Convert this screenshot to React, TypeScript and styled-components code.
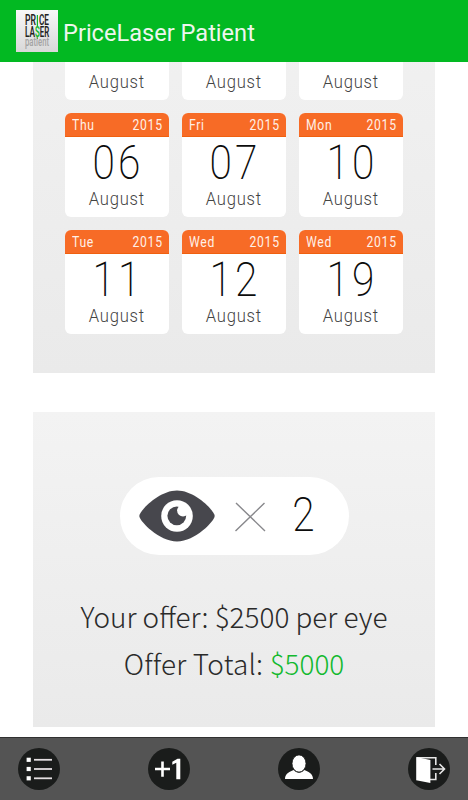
import React from 'react';
import styled, { createGlobalStyle } from 'styled-components';

const GlobalStyle = createGlobalStyle`
  * { box-sizing: border-box; }
  body { margin: 0; background: #fff; font-family: Roboto, "Liberation Sans", sans-serif; }
`;

const Screen = styled.div`
  width: 468px;
  height: 800px;
  display: flex;
  flex-direction: column;
  overflow: hidden;
  background: #fff;
`;

const Header = styled.header`
  flex: none;
  height: 62px;
  padding: 0 16px;
  display: flex;
  align-items: center;
  gap: 5px;
  background: #02b922;
  z-index: 1;
`;

const Title = styled.h1`
  margin: 3px 0 0;
  font-size: 23.6px;
  line-height: 30px;
  font-weight: 400;
  color: #eef6ee;
  white-space: nowrap;
`;

const Content = styled.main`
  flex: 1;
  min-height: 0;
  overflow: hidden;
  padding: 0 33px;
`;

const DatesPanel = styled.section`
  height: 444px;
  margin-top: -133px;
  padding: 67px 32px 0;
  background: linear-gradient(#f3f3f3, #eaeaea);
`;

const DateGrid = styled.div`
  display: grid;
  grid-template-columns: repeat(3, 104px);
  gap: 13px;
`;

const DateCard = styled.article`
  height: 104px;
  border-radius: 6px;
  overflow: hidden;
  background: #fff;
  display: flex;
  flex-direction: column;
  align-items: center;
`;

const CardTop = styled.div`
  width: 100%;
  height: 24px;
  padding: 0 6px 0 7px;
  display: flex;
  justify-content: space-between;
  align-items: center;
  background: #f76b26;
  border-bottom: 1px solid #f0600f;
  color: #fff0e8;
  font-size: 14px;
  letter-spacing: 0.8px;
`;

const CardLabel = styled.span<{ $side: 'left' | 'right' }>`
  transform: scaleX(0.87);
  transform-origin: ${(p) => p.$side} center;
`;

const Day = styled.div`
  height: 51px;
  line-height: 51px;
  padding-left: 3.7px;
  font-size: 49px;
  font-weight: 200;
  letter-spacing: 3.7px;
  color: #0c0c0c;
  transform: scaleX(0.83);
`;

const Month = styled.div`
  line-height: 22px;
  font-size: 18.3px;
  font-weight: 300;
  letter-spacing: 0.8px;
  color: #444;
  transform: scaleX(0.91);
`;

const OfferPanel = styled.section`
  margin-top: 39px;
  height: 315px;
  padding-top: 65px;
  display: flex;
  flex-direction: column;
  align-items: center;
  background: linear-gradient(#f3f3f3, #eaeaea);
`;

const EyePill = styled.div`
  width: 229px;
  height: 78px;
  border-radius: 39px;
  background: #fff;
  padding-left: 19px;
  display: flex;
  align-items: center;
`;

const Times = styled.svg`
  margin: 1px 0 0 20px;
`;

const Count = styled.span`
  margin: -2px 0 0 24px;
  font-size: 49px;
  line-height: 76px;
  font-weight: 200;
  color: #0c0c0c;
  transform: scaleX(0.83);
`;

const OfferText = styled.p<{ $gap: number; $tracking?: number }>`
  margin: ${(p) => p.$gap}px 0 0;
  font-family: "Noto Sans CJK SC", sans-serif;
  font-weight: 300;
  font-size: 27.9px;
  line-height: 46px;
  letter-spacing: ${(p) => p.$tracking ?? 0}px;
  color: #2a2a2a;
  white-space: nowrap;
`;

const Amount = styled.span`
  letter-spacing: 0;
  color: #12b92f;
`;

const Footer = styled.footer`
  flex: none;
  height: 63px;
  border-top: 1px solid #303030;
  background: #545454;
  padding: 0 18px;
  display: flex;
  justify-content: space-between;
  align-items: center;
`;

const NavButton = styled.button`
  width: 42px;
  height: 42px;
  padding: 0;
  border: 0;
  border-radius: 50%;
  background: #1a1c1b;
  display: block;
`;

const dates = [
  ['Mon', '03'], ['Tue', '04'], ['Wed', '05'],
  ['Thu', '06'], ['Fri', '07'], ['Mon', '10'],
  ['Tue', '11'], ['Wed', '12'], ['Wed', '19'],
];

const Logo = () => (
  <svg width="42" height="42" viewBox="0 0 42 42">
    <defs>
      <linearGradient id="tile" x1="0" y1="0" x2="0" y2="1">
        <stop offset="0" stopColor="#f8f8f8" />
        <stop offset="1" stopColor="#d8d8d8" />
      </linearGradient>
    </defs>
    <rect width="42" height="42" fill="url(#tile)" />
    <g fontFamily="Roboto, sans-serif" fontSize="14.5" fontWeight="600" fill="#222">
      <text x="9" y="15.4" textLength="11" lengthAdjust="spacingAndGlyphs">PR</text>
      <text x="23" y="15.4" textLength="10" lengthAdjust="spacingAndGlyphs">CE</text>
      <text x="9" y="27.3" textLength="10" lengthAdjust="spacingAndGlyphs">LA</text>
      <text x="23.8" y="27.3" textLength="9.4" lengthAdjust="spacingAndGlyphs">ER</text>
      <text x="19" y="27.3" textLength="4.8" lengthAdjust="spacingAndGlyphs" fill="#12b52c">S</text>
    </g>
    <path d="M21.4 5v11.5M21.4 26v3" stroke="#12b52c" strokeWidth="1.2" />
    <text x="9" y="36" fontFamily="Roboto, sans-serif" fontSize="12" fontWeight="500" fill="#a2a2a2" textLength="24" lengthAdjust="spacingAndGlyphs">patient</text>
  </svg>
);

const Eye = () => (
  <svg width="76" height="52" viewBox="0 0 76 52">
    <path d="M0.3 26C0.3 21 20 0.6 38 0.6S75.7 21 75.7 26S56 51.4 38 51.4S0.3 31 0.3 26Z" fill="#47474d" />
    <circle cx="38" cy="26" r="15.8" fill="#fff" />
    <circle cx="37.8" cy="25.8" r="9.4" fill="#47474d" />
    <circle cx="44" cy="20.6" r="5.9" fill="#fff" />
  </svg>
);

const ListIcon = () => (
  <svg width="42" height="42" viewBox="0 0 42 42">
    {[11.8, 21, 30.3].map((y) => (
      <g key={y}>
        <rect x="8.6" y={y - 2.1} width="4.2" height="4.2" fill="#fff" />
        <path d={`M16 ${y}H34`} stroke="#e4dfe2" strokeWidth="1.8" />
      </g>
    ))}
  </svg>
);

const PlusOneIcon = () => (
  <svg width="42" height="42" viewBox="0 0 42 42">
    <path d="M7 21H22M14.5 13.5V28.7" fill="none" stroke="#fff" strokeWidth="2.6" />
    <path d="M24.3 13.8L29.5 10.8H32.3V31.3H28.3V14.8L24.3 16.8Z" fill="#fff" />
  </svg>
);

const UserIcon = () => (
  <svg width="42" height="42" viewBox="0 0 42 42">
    <path d="M7 30.9C7 25.5 12 23.3 16 22C18 25.6 24 25.6 26 22C30 23.3 35 25.5 35 30.9Z" fill="#fff" />
    <ellipse cx="21" cy="15.5" rx="7" ry="8.6" fill="#fff" stroke="#1a1c1b" strokeWidth="0.8" />
  </svg>
);

const ExitIcon = () => (
  <svg width="42" height="42" viewBox="0 0 42 42">
    <path d="M9 9.7H27.8V17M27.8 25V31.5H22" fill="none" stroke="#e6e6e6" strokeWidth="1.6" />
    <path d="M8.2 9L22.4 12V35L8.2 32.3Z" fill="#fff" />
    <path d="M24.5 21H36M31.5 16L36.5 21L31.5 26" fill="none" stroke="#e6e6e6" strokeWidth="1.6" />
  </svg>
);

export default function App() {
  return (
    <Screen>
      <GlobalStyle />
      <Header>
        <Logo />
        <Title>PriceLaser Patient</Title>
      </Header>
      <Content>
        <DatesPanel>
          <DateGrid>
            {dates.map(([weekday, day]) => (
              <DateCard key={day}>
                <CardTop>
                  <CardLabel $side="left">{weekday}</CardLabel>
                  <CardLabel $side="right">2015</CardLabel>
                </CardTop>
                <Day>{day}</Day>
                <Month>August</Month>
              </DateCard>
            ))}
          </DateGrid>
        </DatesPanel>
        <OfferPanel>
          <EyePill>
            <Eye />
            <Times width="31" height="30" viewBox="0 0 31 30">
              <path d="M1 1L30 29M29.5 1L0.5 29" stroke="#88888c" strokeWidth="1.4" />
            </Times>
            <Count>2</Count>
          </EyePill>
          <OfferText $gap={38}>Your offer: $2500 per eye</OfferText>
          <OfferText $gap={1} $tracking={0.2}>
            Offer Total: <Amount>$5000</Amount>
          </OfferText>
        </OfferPanel>
      </Content>
      <Footer>
        <NavButton aria-label="List"><ListIcon /></NavButton>
        <NavButton aria-label="Add one"><PlusOneIcon /></NavButton>
        <NavButton aria-label="Profile"><UserIcon /></NavButton>
        <NavButton aria-label="Exit"><ExitIcon /></NavButton>
      </Footer>
    </Screen>
  );
}
